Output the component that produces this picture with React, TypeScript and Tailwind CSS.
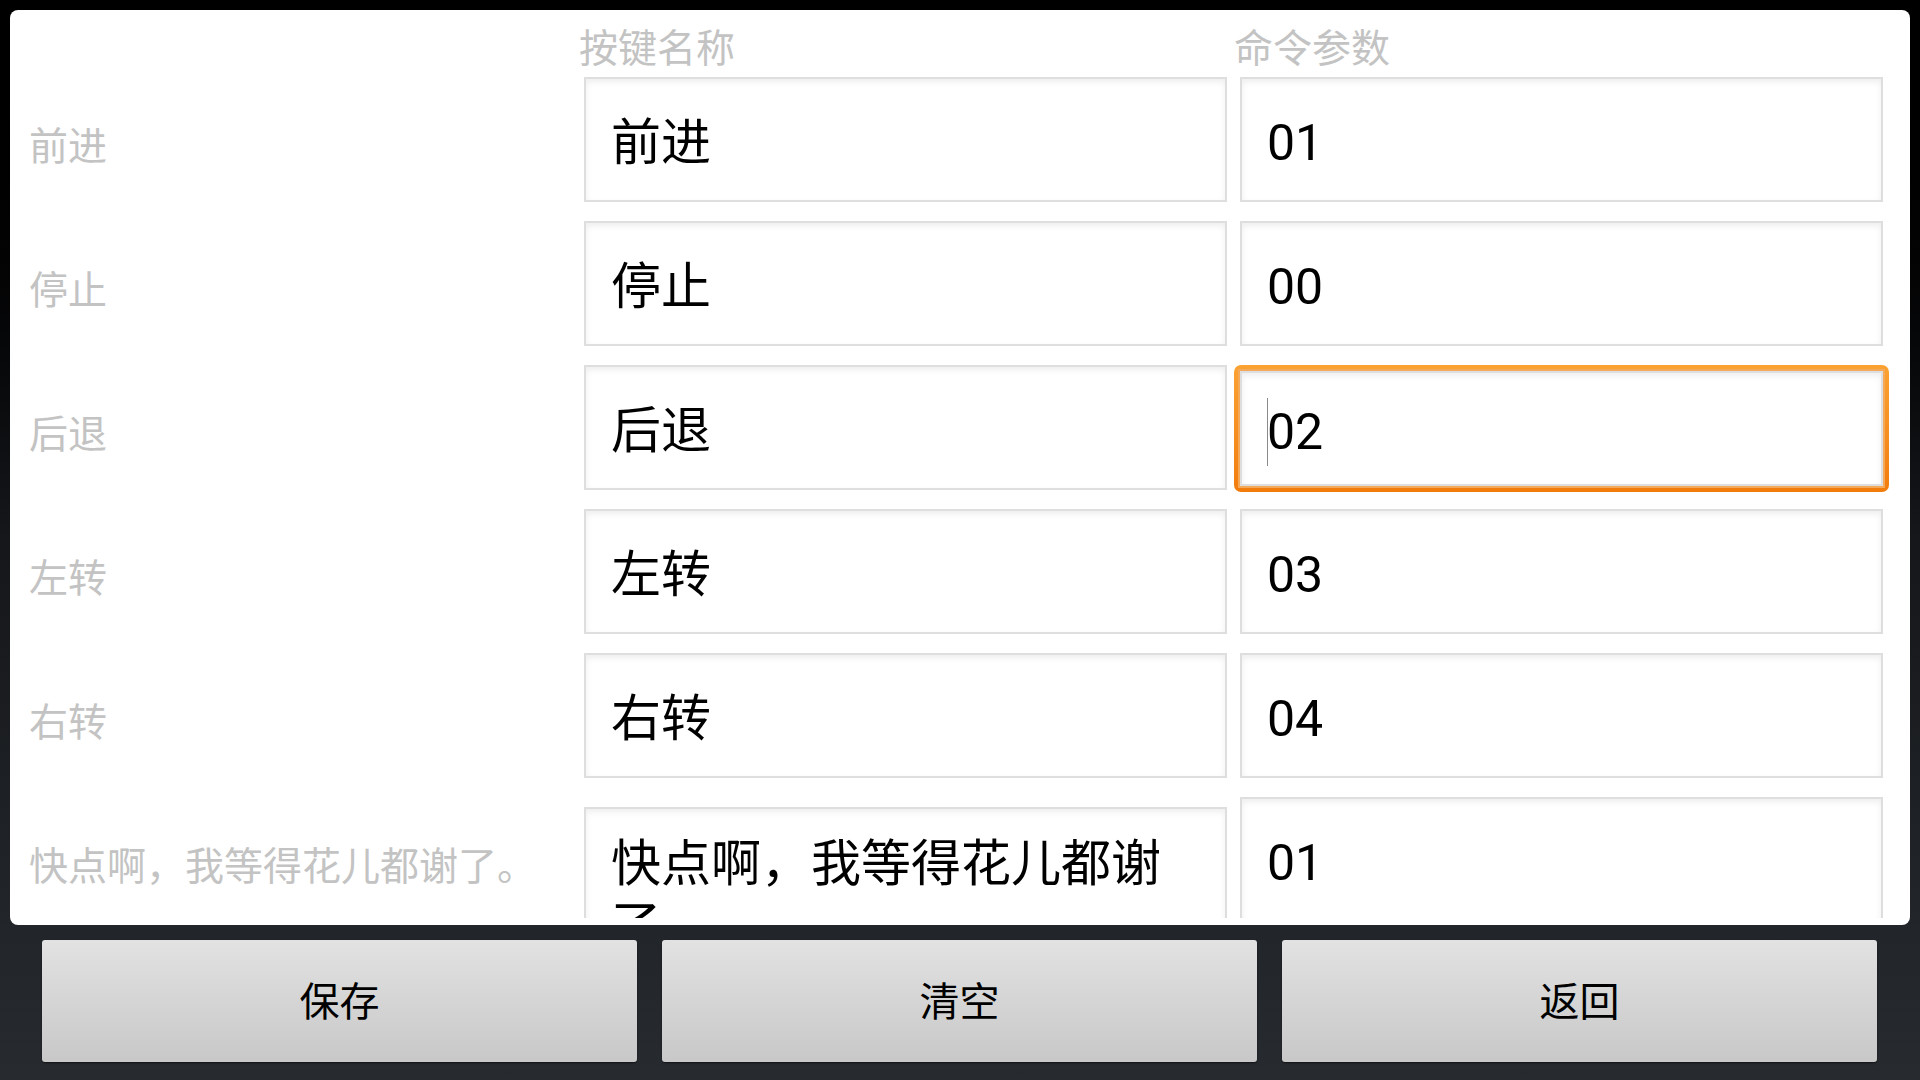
import React from "react";

interface KeyRow {
    label: string;
    name: string;
    param: string;
}

const rows: KeyRow[] = [
    { label: "前进", name: "前进", param: "01" },
    { label: "停止", name: "停止", param: "00" },
    { label: "后退", name: "后退", param: "02" },
    { label: "左转", name: "左转", param: "03" },
    { label: "右转", name: "右转", param: "04" },
];

const longText = "快点啊，我等得花儿都谢了。";

// edit text box look (light border + inner top shadow)
const boxStyle =
    "w-[643px] shrink-0 bg-white border-2 border-[#dedede] shadow-[inset_0_3px_6px_rgba(0,0,0,0.07)]";

const labelStyle = "w-[555px] h-[125px] shrink-0 flex items-center pt-[15px] text-[39px] leading-[40px] text-[#c3c3c3] whitespace-nowrap";

const Field: React.FC<{ text: string; focused?: boolean }> = ({ text, focused }) => {
    if (!focused) {
        return (
            <div className={`${boxStyle} h-[125px] flex items-center pt-[6px] px-[25px] text-[50px] leading-[60px] text-black`}>
                <span>{text}</span>
            </div>
        );
    }
    return (
        <div className="-mx-[6px] h-[127px] p-[4px] rounded-[7px] bg-gradient-to-b from-[#fba232] to-[#f27c0a] shrink-0">
            <div className="p-[2px] h-full bg-[#f3a85a]">
                <div className={`${boxStyle} h-full flex items-center pt-[6px] px-[25px] text-[50px] leading-[60px] text-black`}>
                    <span className="inline-block w-px h-[68px] bg-[#8a8a8a] -mr-px" />
                    <span>{text}</span>
                </div>
            </div>
        </div>
    );
};

const ActionButton: React.FC<{ label: string }> = ({ label }) => (
    <button className="w-[595px] h-[122px] rounded-[3px] bg-gradient-to-b from-[#e2e2e2] to-[#c8c8c8] shadow-[0_1px_2px_rgba(0,0,0,0.6)] text-[40px] leading-none pt-[4px] text-black">
        {label}
    </button>
);

export default function App() {
    return (
        <div className="w-[1920px] h-[1080px] bg-gradient-to-b from-black via-[#15171a] to-[#272b30] font-['Roboto','Noto_Sans_CJK_SC',sans-serif] flex flex-col overflow-hidden">
            {/* main panel */}
            <div className="mt-[10px] mx-[10px] h-[915px] rounded-[8px] bg-white">
                <div className="h-[908px] overflow-hidden pl-[19px]">
                    {/* column headers */}
                    <div className="flex h-[67px] pt-[11px] items-center text-[39px] text-[#c3c3c3]">
                        <div className="w-[555px] shrink-0" />
                        <div className="w-[643px] shrink-0 -ml-[5px]">按键名称</div>
                        <div className="ml-[12px]">命令参数</div>
                    </div>

                    <div className="flex flex-col gap-[19px]">
                        {rows.map((r, i) => (
                            <div key={r.label} className="flex items-start h-[125px]">
                                <div className={labelStyle}>{r.label}</div>
                                <Field text={r.name} />
                                <div className="ml-[13px]">
                                    <Field text={r.param} focused={i === 2} />
                                </div>
                            </div>
                        ))}

                        {/* last row, cut off by the scroll area */}
                        <div className="flex items-start">
                            <div className={labelStyle}>{longText}</div>
                            <div className={`${boxStyle} h-[140px] mt-[10px] pt-[24px] px-[25px] text-[50px] leading-[62px] text-black`}>
                                {longText}
                            </div>
                            <div className="ml-[13px]">
                                <Field text="01" />
                            </div>
                        </div>
                    </div>
                </div>
            </div>

            {/* bottom buttons */}
            <div className="flex justify-between pl-[42px] pr-[43px] mt-[15px]">
                <ActionButton label="保存" />
                <ActionButton label="清空" />
                <ActionButton label="返回" />
            </div>
        </div>
    );
}
